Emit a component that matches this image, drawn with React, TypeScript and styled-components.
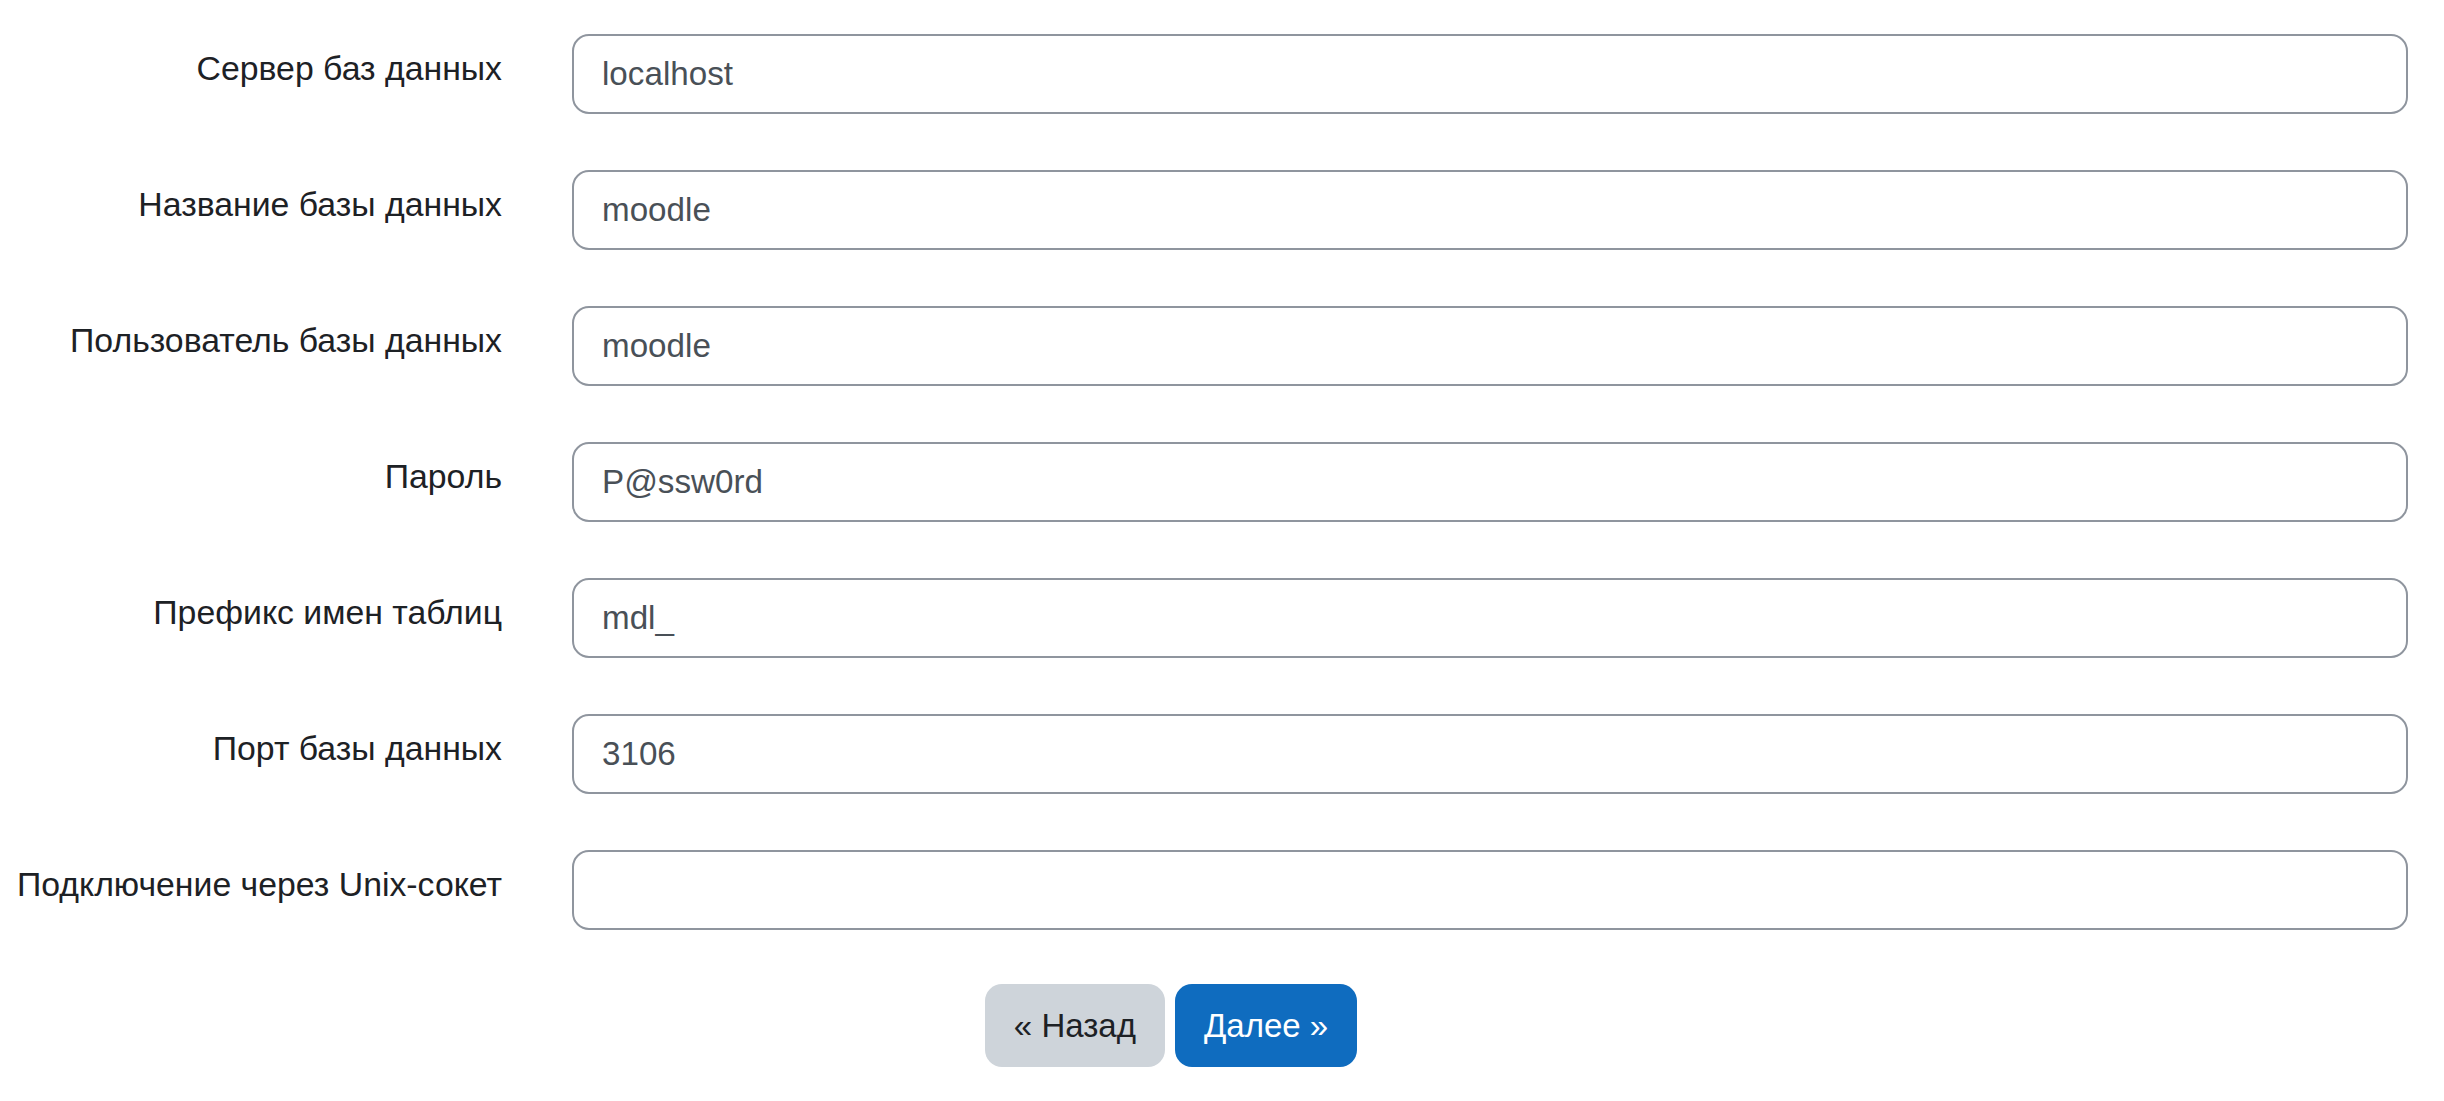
import styled, { createGlobalStyle } from "styled-components"

const GlobalStyle = createGlobalStyle`
    html, body {
        margin: 0;
        padding: 0;
        background: #ffffff;
    }
    body {
        font-family: "Liberation Sans", Arial, sans-serif;
        color: #1d2125;
    }
`

const Page = styled.form`
    padding: 34px 36px 0 0;
    display: flex;
    flex-direction: column;
`

const Fields = styled.div`
    display: flex;
    flex-direction: column;
    gap: 56px;
`

const Row = styled.div`
    display: flex;
    align-items: flex-start;
    gap: 70px;
`

const Label = styled.label`
    width: 502px;
    flex-shrink: 0;
    text-align: right;
    font-size: 33.8px;
    line-height: 49.5px;
    padding-top: 10px;
    color: #1d2125;
    white-space: nowrap;
`

const Field = styled.input`
    flex: 1;
    box-sizing: border-box;
    height: 80px;
    border: 2px solid #8f959e;
    border-radius: 17px;
    padding: 0 28px;
    font-family: "Liberation Sans", Arial, sans-serif;
    font-size: 33.2px;
    color: #495057;
    background: #ffffff;
    outline: none;
`

const Buttons = styled.div`
    display: flex;
    justify-content: center;
    gap: 10px;
    margin-top: 54px;
    padding-right: 66px;
`

const Button = styled.button<{ $primary?: boolean }>`
    height: 83px;
    box-sizing: border-box;
    padding: 0 29px;
    border: none;
    border-radius: 17px;
    font-family: "Liberation Sans", Arial, sans-serif;
    font-size: 33px;
    background: ${p => (p.$primary ? "#0f6cbf" : "#ced4da")};
    color: ${p => (p.$primary ? "#ffffff" : "#1d2125")};
    cursor: pointer;
`

const fields = [
    { label: "Сервер баз данных", value: "localhost" },
    { label: "Название базы данных", value: "moodle" },
    { label: "Пользователь базы данных", value: "moodle" },
    { label: "Пароль", value: "P@ssw0rd" },
    { label: "Префикс имен таблиц", value: "mdl_" },
    { label: "Порт базы данных", value: "3106" },
    { label: "Подключение через Unix-сокет", value: "" },
]

export default function App() {
    return <>
        <GlobalStyle />
        <Page onSubmit={e => e.preventDefault()}>
            <Fields>
                {fields.map((f, i) => (
                    <Row key={i}>
                        <Label htmlFor={`f${i}`}>{f.label}</Label>
                        <Field id={`f${i}`} type="text" defaultValue={f.value} />
                    </Row>
                ))}
            </Fields>
            <Buttons>
                <Button type="button">« Назад</Button>
                <Button type="submit" $primary>Далее »</Button>
            </Buttons>
        </Page>
    </>
}
